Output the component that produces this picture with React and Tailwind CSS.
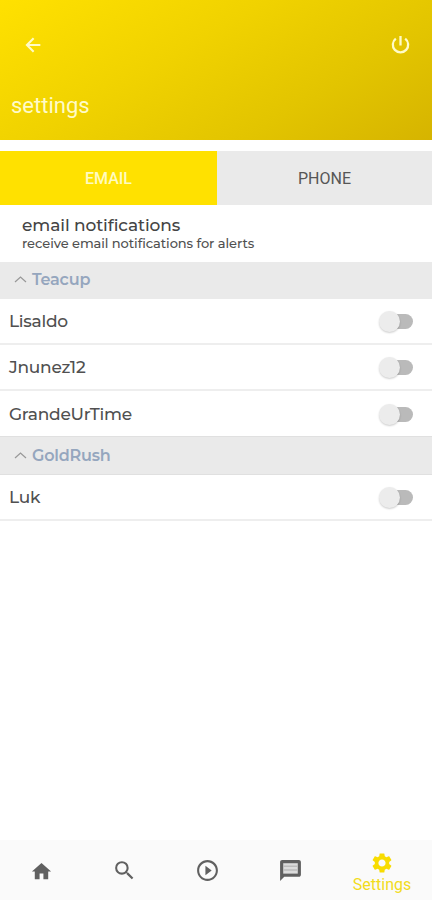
import React, { useState } from "react";
import { MdHome, MdSearch, MdPlayCircleOutline, MdSettings } from "react-icons/md";

const groups = [
  { name: "Teacup", first: true, members: ["Lisaldo", "Jnunez12", "GrandeUrTime"] },
  { name: "GoldRush", first: false, members: ["Luk"] },
];

function BackIcon() {
  return (
    <svg width="22" height="22" viewBox="0 0 24 24" fill="none" stroke="currentColor" strokeWidth="2.3">
      <path d="M20 12H5.5M12.7 4.7L5.4 12l7.3 7.3" />
    </svg>
  );
}

function PowerIcon() {
  return (
    <svg width="23" height="23" viewBox="0 0 24 24" fill="none" stroke="currentColor" strokeWidth="2.4">
      <path d="M12 3v10M7.1 5.9a8 8 0 1 0 9.8 0" />
    </svg>
  );
}

function MessageIcon() {
  return (
    <svg width="25" height="25" viewBox="0 0 24 24" fill="currentColor">
      <path d="M4 2h16c1.1 0 2 .9 2 2v12c0 1.1-.9 2-2 2H6l-4 4V4c0-1.1.9-2 2-2z" />
      <path d="M5 5h14v10H5z" fill="#dcdcdc" />
      <path d="M5 8h14M5 11.6h14" stroke="#bcbcbc" strokeWidth="1.4" />
    </svg>
  );
}

function Toggle({ checked, onChange }) {
  return (
    <button role="switch" aria-checked={checked} onClick={onChange} className="relative w-[34px] h-6">
      <span className={`absolute left-0.5 top-[5px] w-8 h-[15px] rounded-full ${checked ? "bg-[#ffe100]" : "bg-[#bababa]"}`} />
      <span className={`absolute top-0.5 w-[21px] h-[21px] rounded-full bg-[#ececec] shadow-[0_1px_2px_rgba(0,0,0,0.2)] ${checked ? "right-0" : "left-0"}`} />
    </button>
  );
}

function App() {
  const [tab, setTab] = useState("email");
  const [closed, setClosed] = useState({});
  const [enabled, setEnabled] = useState({});

  const flip = (setter, key) => setter((prev) => ({ ...prev, [key]: !prev[key] }));

  return (
    <div className="w-full h-[900px] flex flex-col bg-white overflow-hidden font-['Roboto',sans-serif]">
      <header className="h-[140px] shrink-0 text-[#fffbc8] bg-[linear-gradient(150deg,#ffe100_0%,#f0d200_40%,#e2c400_72%,#d6b400_100%)]">
        <div className="flex justify-between items-center pt-[33px] pl-[22px] pr-5">
          <button aria-label="Back"><BackIcon /></button>
          <button aria-label="Log out"><PowerIcon /></button>
        </div>
        <h1 className="pl-[11px] mt-[35px] text-[22px] leading-[30px]">settings</h1>
      </header>

      <div className="flex h-[54px] mt-[11px] shrink-0">
        <button
          className={`w-[217px] text-base pt-0.5 ${tab === "email" ? "bg-[#ffe100] text-[#fffbc0] font-medium" : "bg-[#eaeaea] text-[#565656]"}`}
          onClick={() => setTab("email")}
        >
          EMAIL
        </button>
        <button
          className={`flex-1 text-base pt-0.5 ${tab === "phone" ? "bg-[#ffe100] text-[#fffbc0] font-medium" : "bg-[#eaeaea] text-[#565656]"}`}
          onClick={() => setTab("phone")}
        >
          PHONE
        </button>
      </div>

      <main className="flex-1 font-['Montserrat',sans-serif] text-[#505050]">
        <div className="h-[57px] pl-[22px] pt-[10px]">
          <h2 className="text-[17px] leading-5 font-medium tracking-[-0.1px] text-[#444]">{tab} notifications</h2>
          <p className="text-[13px] leading-4 font-medium tracking-[-0.07px]">receive {tab} notifications for alerts</p>
        </div>
        {groups.map((g) => (
          <section key={g.name}>
            <button
              className={`w-full flex items-center bg-[#eaeaea] pl-[14px] ${g.first ? "h-[37px] pb-0.5" : "h-[39px] border-y border-[#e0e0e0]"}`}
              onClick={() => flip(setClosed, g.name)}
            >
              <svg width="13" height="8" viewBox="0 0 13 8" fill="none" stroke="#989898" strokeWidth="1.2">
                <path d="M1 6L6.5 1L12 6" />
              </svg>
              <span className="ml-[5px] text-base font-semibold tracking-[-0.2px] text-[#95a6be]">{g.name}</span>
            </button>
            {!closed[g.name] && g.members.map((name, i) => (
              <div
                key={name}
                className={`flex items-center justify-between pl-[9px] pr-[19px] ${g.first && i === 2 ? "h-[45px]" : "h-[46px] border-b-2 border-[#eeeeee]"}`}
              >
                <span className="text-[17px] leading-5 font-medium tracking-[-0.25px]">{name}</span>
                <Toggle checked={!!enabled[name]} onChange={() => flip(setEnabled, name)} />
              </div>
            ))}
          </section>
        ))}
      </main>

      <nav className="h-[60px] shrink-0 grid grid-cols-[83px_83px_83px_83px_1fr] items-center bg-[#fafafa] text-[#606060]">
        <button className="flex justify-center pt-0.5" aria-label="Home"><MdHome size={23} /></button>
        <button className="flex justify-center pt-px" aria-label="Search"><MdSearch size={25} /></button>
        <button className="flex justify-center pt-px" aria-label="Play"><MdPlayCircleOutline size={25} /></button>
        <button className="flex justify-center pt-px" aria-label="Messages"><MessageIcon /></button>
        <button className="flex flex-col items-center pt-1.5 text-[#f2dc1c]">
          <MdSettings size={24} className="text-[#f8dc00]" />
          <span className="text-base leading-5">Settings</span>
        </button>
      </nav>
    </div>
  );
}

export default App;
